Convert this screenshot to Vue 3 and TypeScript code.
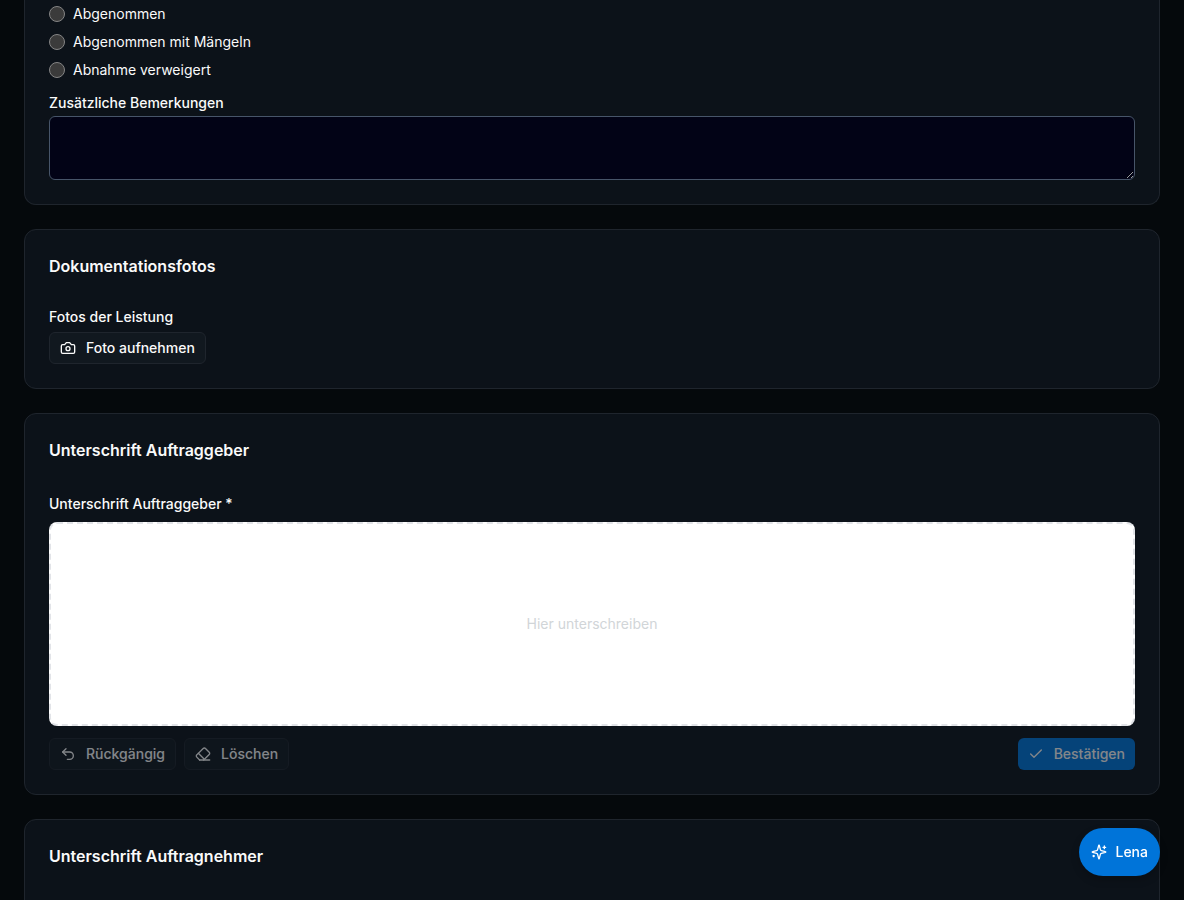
<script setup lang="ts">
import { ref } from 'vue'

const results: string[] = ['Abgenommen', 'Abgenommen mit Mängeln', 'Abnahme verweigert']
const result = ref<string>('')
const remarks = ref<string>('')
const hasSignature = ref<boolean>(false)
</script>

<template>
  <main class="page">
    <section class="card card-first">
      <div class="options" role="radiogroup" aria-label="Abnahmeergebnis">
        <label v-for="item in results" :key="item" class="option">
          <input v-model="result" type="radio" name="result" :value="item" />
          <span>{{ item }}</span>
        </label>
      </div>
      <label class="label label-area" for="remarks">Zusätzliche Bemerkungen</label>
      <textarea id="remarks" v-model="remarks" class="textarea"></textarea>
    </section>

    <section class="card">
      <h2>Dokumentationsfotos</h2>
      <p class="label">Fotos der Leistung</p>
      <button type="button" class="btn">
        <svg class="icon" viewBox="0 0 24 24">
          <path d="M14.5 4h-5L7 7H4a2 2 0 0 0-2 2v9a2 2 0 0 0 2 2h16a2 2 0 0 0 2-2V9a2 2 0 0 0-2-2h-3z" />
          <circle cx="12" cy="13" r="3" />
        </svg>
        Foto aufnehmen
      </button>
    </section>

    <section class="card">
      <h2>Unterschrift Auftraggeber</h2>
      <p class="label label-sign">Unterschrift Auftraggeber *</p>
      <div class="pad">Hier unterschreiben</div>
      <div class="actions">
        <button type="button" class="btn" :disabled="!hasSignature">
          <svg class="icon" viewBox="0 0 24 24">
            <path d="M9 14 4 9l5-5" />
            <path d="M4 9h10.500a5.500 5.500 0 0 1 0 11H11" />
          </svg>
          Rückgängig
        </button>
        <button type="button" class="btn" :disabled="!hasSignature">
          <svg class="icon" viewBox="0 0 24 24">
            <path d="m7 21-4.300-4.300c-1-1-1-2.500 0-3.400l9.600-9.600c1-1 2.500-1 3.400 0l5.600 5.600c1 1 1 2.500 0 3.400L13 21" />
            <path d="M22 21H7" />
            <path d="m5 11 9 9" />
          </svg>
          Löschen
        </button>
        <button type="button" class="btn btn-primary" :disabled="!hasSignature">
          <svg class="icon" viewBox="0 0 24 24"><path d="M20 6 9 17l-5-5" /></svg>
          Bestätigen
        </button>
      </div>
    </section>

    <section class="card">
      <h2>Unterschrift Auftragnehmer</h2>
    </section>
  </main>

  <button type="button" class="assistant">
    <svg class="icon" viewBox="0 0 24 24">
      <path d="M9.900 15.500A2 2 0 0 0 8.500 14.100l-6.100-1.600a.5.5 0 0 1 0-1L8.500 9.900A2 2 0 0 0 9.900 8.500l1.600-6.100a.5.5 0 0 1 1 0l1.600 6.100a2 2 0 0 0 1.400 1.400l6.100 1.600a.5.5 0 0 1 0 1l-6.100 1.600a2 2 0 0 0-1.400 1.400l-1.600 6.100a.5.5 0 0 1-1 0z" />
      <path d="M20 3v4M22 5h-4M4 17v2M5 18H3" />
    </svg>
    Lena
  </button>
</template>

<style>
html,
body {
  background: #05090c;
}
body {
  overflow: hidden;
}
</style>

<style scoped>
* {
  box-sizing: border-box;
}
.page {
  display: flex;
  flex-direction: column;
  gap: 24px;
  padding: 0 24px;
  color: #fafafa;
  font-family: Inter, "Noto Sans", sans-serif;
  font-size: 14px;
  line-height: 20px;
}
.card {
  padding: 24px;
  background: #0c1219;
  border: 1px solid #1f252d;
  border-radius: 12px;
}
.card-first {
  padding-top: 4px;
  border-top: 0;
  border-radius: 0 0 12px 12px;
}
.options {
  display: flex;
  flex-direction: column;
  gap: 8px;
  margin-bottom: 12px;
}
.option {
  display: flex;
  align-items: center;
  gap: 8px;
}
.option input {
  appearance: none;
  width: 16px;
  height: 16px;
  margin: 0;
  background: #3b3b3b;
  border: 1px solid #858585;
  border-radius: 50%;
}
.option input:checked {
  background: #0075dc;
}
h2 {
  margin: 0 0 28px;
  font-size: 16px;
  font-weight: 600;
  line-height: 24px;
}
.label {
  display: block;
  margin: 0 0 4px;
  font-weight: 500;
  line-height: 22px;
}
.label-area {
  margin-bottom: 2px;
}
.label-sign {
  margin: 31px 0 7px;
}
.textarea {
  display: block;
  width: 100%;
  height: 64px;
  padding: 8px 12px;
  color: inherit;
  font: inherit;
  background: #020316;
  border: 1px solid #475569;
  border-radius: 6px;
  resize: vertical;
}
.icon {
  width: 16px;
  height: 16px;
  fill: none;
  stroke: currentColor;
  stroke-width: 2;
  stroke-linecap: round;
  stroke-linejoin: round;
}
.btn {
  display: inline-flex;
  align-items: center;
  gap: 10px;
  height: 32px;
  padding: 0 10px;
  color: #fafafa;
  font: inherit;
  font-weight: 500;
  background: #11181f;
  border: 1px solid #1f252d;
  border-radius: 6px;
}
.btn:disabled {
  opacity: 0.5;
}
.pad {
  display: flex;
  align-items: center;
  justify-content: center;
  height: 204px;
  color: #d1d5d8;
  background: #fff;
  border: 2px dashed #e2e4e8;
  border-radius: 8px;
}
.actions {
  display: flex;
  gap: 8px;
  margin-top: 12px;
}
.btn-primary {
  margin-left: auto;
  background: #0074d9;
  border: 0;
}
.assistant {
  position: fixed;
  right: 24px;
  bottom: 24px;
  display: flex;
  align-items: center;
  gap: 8px;
  height: 48px;
  padding: 0 12px;
  color: #fff;
  font: 500 14px/20px Inter, "Noto Sans", sans-serif;
  background: #0074d9;
  border: 0;
  border-radius: 24px;
  box-shadow: 0 4px 8px rgba(0, 0, 0, 0.2);
}
</style>
